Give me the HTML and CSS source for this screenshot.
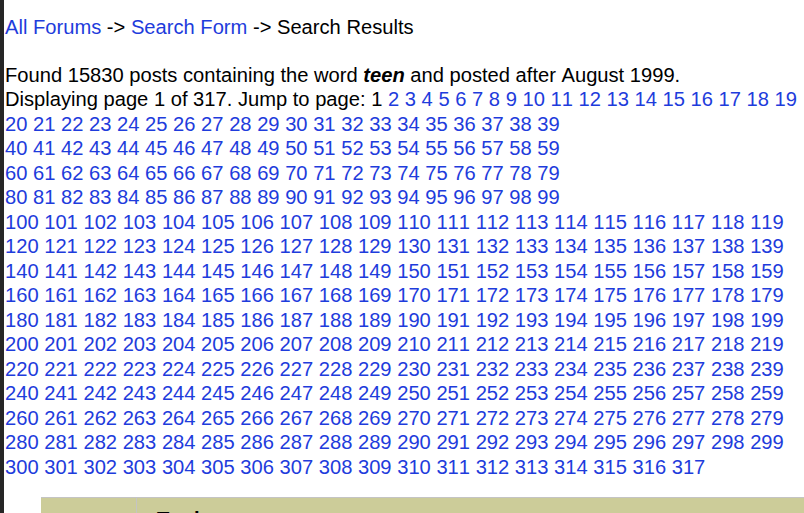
FILE: index.html
```html
<!DOCTYPE html>
<html lang="en">
<head>
  <meta charset="UTF-8">
  <title>Search Results</title>
  <link rel="stylesheet" href="styles.css">
</head>
<body>

  <div class="trail">
    <a href="#">All Forums</a> -&gt; <a href="#">Search Form</a> -&gt; Search Results
  </div>

  <div class="resultado">
    Found 15830 posts containing the word <b><i>teen</i></b> and posted after August 1999.<br>
    Displaying page 1 of 317. Jump to page: <span id="paginas"></span>
  </div>

  <table class="topicos">
    <tr>
      <th class="autor">&nbsp;</th>
      <th class="assunto">Topic</th>
    </tr>
  </table>

  <script>
    const totalPaginas = 317;
    let html = '1 ';
    for (let i = 2; i <= totalPaginas; i++) {
      html += '<a href="#">' + i + '</a>';
      if (i % 20 === 19 && i !== totalPaginas) {
        html += '<br>';
      } else {
        html += ' ';
      }
    }
    document.getElementById('paginas').innerHTML = html;
  </script>

</body>
</html>
```

FILE: styles.css
```css
html {
  overflow: hidden;
}
body {
  margin: 0;
  padding: 15px 0 0 1px;
  border-left: 4px solid #262626;
  min-height: 100vh;
  background-color: #fff;
  color: #000;
  font-family: "Liberation Sans", Arial, sans-serif;
  font-size: 20.15px;
  line-height: 24.5px;
  font-kerning: none;
}
a {
  color: #1e3cdc;
  text-decoration: none;
}
.trail {
  margin-bottom: 23px;
}
.resultado {
  white-space: nowrap;
}
.topicos {
  margin: 18px 0 0 36px;
  width: 820px;
  border-collapse: collapse;
  background-color: #cccc99;
  border-top: 1px solid #c4c4c4;
}
.topicos th {
  height: 40px;
  padding: 9px 0 0 20px;
  text-align: left;
  vertical-align: top;
  font-size: 20.15px;
}
.topicos .autor {
  width: 75px;
  border-right: 1px solid #c4c4c4;
}
```
